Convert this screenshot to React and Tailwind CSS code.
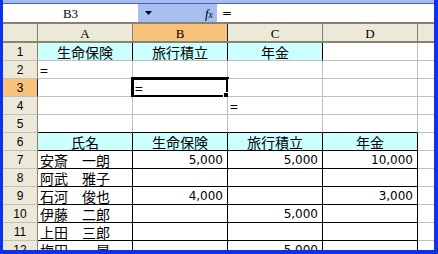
import React from 'react';

const CJK = "font-['Noto_Sans_CJK_JP',sans-serif]";

// cell kinds: l = left text, c = centered (cyan header), n = number (right)
const sheet = [
  { n: 1, cells: [
    { t: '生命保険', a: 'c', bg: 'cyan', r: 'dark' },
    { t: '旅行積立', a: 'c', bg: 'cyan', r: 'dark' },
    { t: '年金', a: 'c', bg: 'cyan', r: 'dark' },
    {},
  ] },
  { n: 2, cells: [{ t: '=', a: 'l' }, {}, {}, {}] },
  { n: 3, cells: [{}, { t: '=', a: 'l', sel: true }, {}, {}] },
  { n: 4, cells: [{}, {}, { t: '=', a: 'l' }, {}] },
  { n: 5, cells: [{ b: 'dark' }, { b: 'dark' }, { b: 'dark' }, { b: 'dark' }] },
  { n: 6, table: true, cells: [
    { t: '氏名', a: 'c', bg: 'cyan' },
    { t: '生命保険', a: 'c', bg: 'cyan' },
    { t: '旅行積立', a: 'c', bg: 'cyan' },
    { t: '年金', a: 'c', bg: 'cyan' },
  ] },
  { n: 7, table: true, cells: [{ t: '安斎　一朗', a: 'l' }, { t: '5,000', a: 'n' }, { t: '5,000', a: 'n' }, { t: '10,000', a: 'n' }] },
  { n: 8, table: true, cells: [{ t: '阿武　雅子', a: 'l' }, {}, {}, {}] },
  { n: 9, table: true, cells: [{ t: '石河　俊也', a: 'l' }, { t: '4,000', a: 'n' }, {}, { t: '3,000', a: 'n' }] },
  { n: 10, table: true, cells: [{ t: '伊藤　二郎', a: 'l' }, {}, { t: '5,000', a: 'n' }, {}] },
  { n: 11, table: true, cells: [{ t: '上田　三郎', a: 'l' }, {}, {}, {}] },
  { n: 12, table: true, cells: [{ t: '梅田　一晃', a: 'l' }, {}, { t: '5,000', a: 'n' }, {}] },
];

function Cell({ cell, table }) {
  const dark = table || cell.r === 'dark';
  const darkB = table || cell.b === 'dark';
  const align =
    cell.a === 'c' ? 'justify-center' : cell.a === 'n' ? 'justify-end pr-[4px]' : 'justify-start pl-[2px]';
  return (
    <div
      className={`relative w-[95px] h-[18px] shrink-0 flex items-end pb-[1px] border-r border-b ${align} ${
        cell.bg === 'cyan' ? 'bg-[#ccffff]' : 'bg-white'
      } ${dark ? 'border-r-[#000000]' : 'border-r-[#c0c0c0]'} ${darkB ? 'border-b-[#000000]' : 'border-b-[#c0c0c0]'}`}
    >
      {cell.t && (
        <span
          className={`block text-black whitespace-nowrap ${
            cell.a === 'n'
              ? "font-['DejaVu_Sans',sans-serif] text-[12px] h-[12px] leading-[12px] mb-[1px]"
              : `${CJK} text-[14px] h-[14px] leading-[14px]`
          }`}
        >
          {cell.t}
        </span>
      )}
      {cell.sel && (
        <>
          <div className="absolute left-[-2px] top-[-2px] w-[98px] h-[21px] border-[3px] border-black pointer-events-none" />
          <div className="absolute left-[90px] top-[13px] w-[8px] h-[8px] bg-black border border-white" />
        </>
      )}
    </div>
  );
}

export default function App() {
  return (
    <div className="w-[438px] h-[254px] overflow-hidden bg-[#0b34ea] pl-[3px] pr-[4px] pb-[4px]">
      <div className="h-full bg-white flex flex-col overflow-hidden">
        {/* formula bar */}
        <div className="h-[4px] shrink-0 bg-[#a7bcec] border-b border-[#3d63c4]" />
        <div className="h-[18px] shrink-0 flex">
          <div className="w-[135px] bg-white flex items-center justify-center">
            <span className="font-['Liberation_Serif',serif] text-[13px] leading-none text-black">B3</span>
          </div>
          <div className="w-[79px] bg-[#a6bff0] flex items-center justify-between pl-[7px] pr-[4px]">
            <svg width="8" height="4" viewBox="0 0 8 4">
              <path d="M0 0H7L3.5 4Z" fill="#000" />
            </svg>
            <span className="font-['Liberation_Serif',serif] italic text-[13px] leading-none text-black">
              f<span className="text-[10px]">x</span>
            </span>
          </div>
          <div className="flex-1 bg-white flex items-center pl-[5px]">
            <span className="font-['DejaVu_Sans',sans-serif] text-[12px] leading-none text-black">=</span>
          </div>
        </div>
        <div className="h-[2px] shrink-0 bg-[#86836f]" />

        {/* column headers */}
        <div className="h-[19px] shrink-0 flex bg-[#ece9d8] border-b-2 border-[#86836f]">
          <div className="w-[35px] shrink-0 border-r border-[#86836f]" />
          {['A', 'B', 'C', 'D'].map((c) => (
            <div
              key={c}
              className={`w-[95px] shrink-0 flex items-center justify-center border-r ${
                c === 'B' ? 'bg-[#f9c27a] border-[#0a246a]' : 'border-[#86836f]'
              }`}
            >
              <span className="font-['Liberation_Serif',serif] text-[13px] leading-none text-black pt-[2px]">{c}</span>
            </div>
          ))}
          <div className="flex-1" />
        </div>

        {/* rows */}
        {sheet.map((row) => (
          <div key={row.n} className="flex shrink-0">
            <div
              className={`w-[35px] h-[18px] shrink-0 flex items-center justify-center border-b border-b-[#c0c0c0] border-r ${
                row.n === 3 ? 'bg-[#f9c27a] border-r-[#0a246a]' : 'bg-[#ece9d8] border-r-[#86836f]'
              }`}
            >
              <span className="font-['Liberation_Sans',sans-serif] text-[12px] leading-none text-black">{row.n}</span>
            </div>
            {row.cells.map((cell, i) => (
              <Cell key={i} cell={cell} table={row.table} />
            ))}
            <div className="flex-1 h-[18px] border-b border-[#c0c0c0]" />
          </div>
        ))}
      </div>
    </div>
  );
}
